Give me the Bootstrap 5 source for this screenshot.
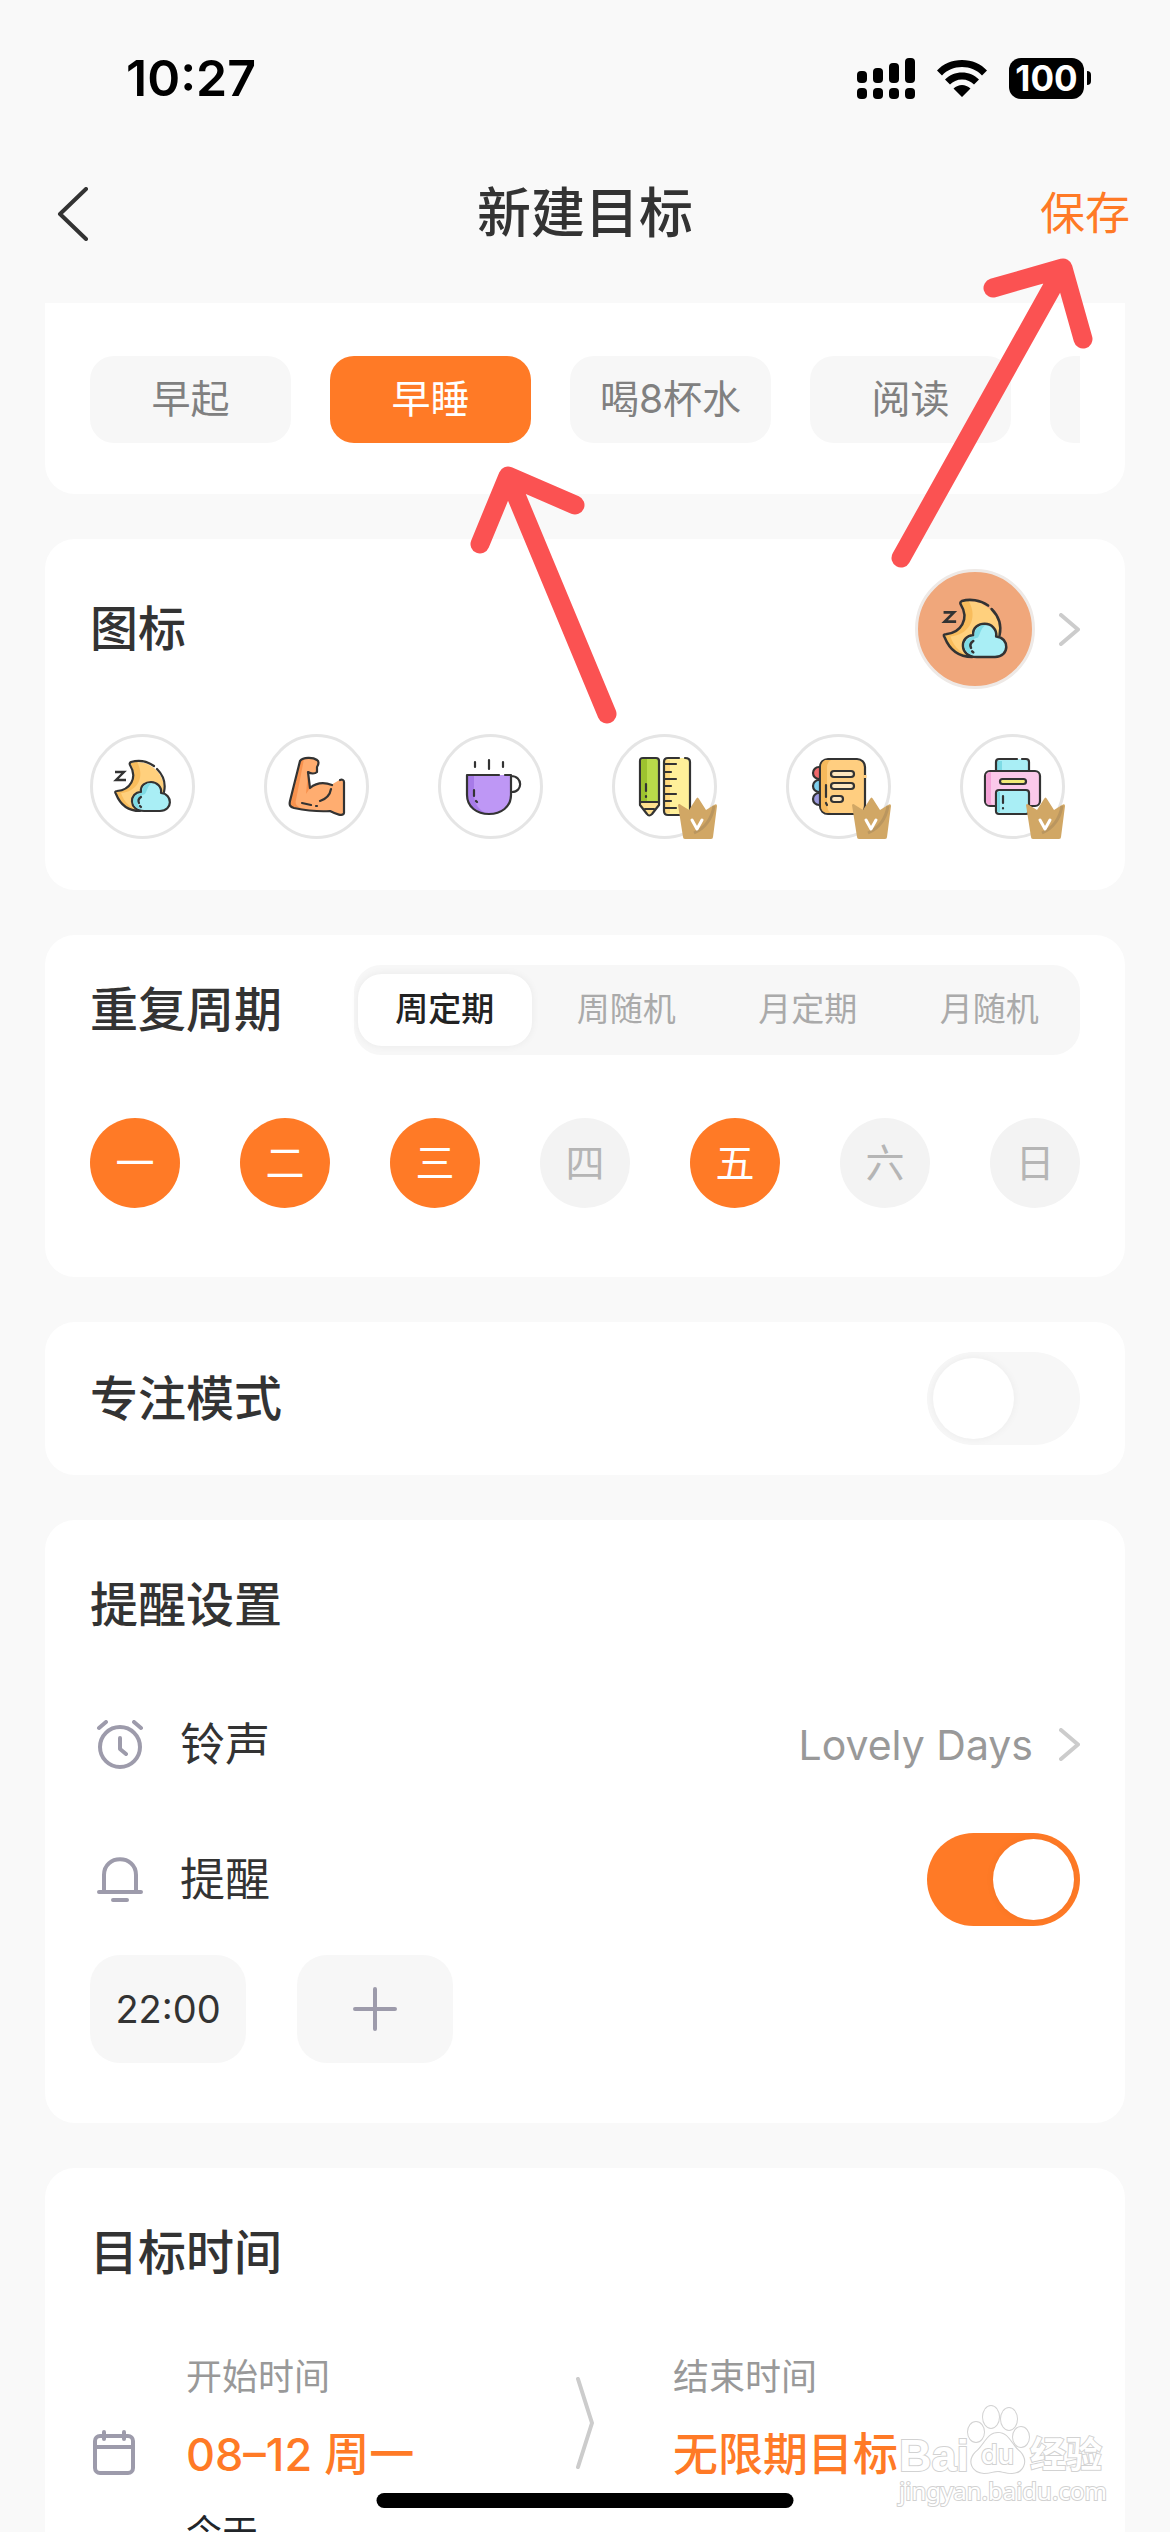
<!DOCTYPE html>
<html lang="zh-CN">
<head>
<meta charset="utf-8">
<meta name="viewport" content="width=device-width, initial-scale=1">
<title>新建目标</title>
<link rel="stylesheet" href="https://cdn.jsdelivr.net/npm/bootstrap@5.3.0/dist/css/bootstrap.min.css">
<style>
  :root { --accent: #ff7a26; --ink: #333; --soft: #f7f7f7; --muted: #999; }
  body { background: #f9f9f9; color: var(--ink); font-family: Inter, "Noto Sans CJK SC", sans-serif; font-size: 45px; line-height: 60px; }
  svg { display: block; flex: none; }
  .status-bar { height: 156px; padding: 0 79px 0 126px; }
  .wifi { margin: 0 22px; }
  .clock { font-size: 50px; font-weight: 600; color: #000; }
  .battery-box { width: 75px; height: 41px; border-radius: 12px; background: #000; color: #fff; font-size: 35px; line-height: 41px; font-weight: 700; }
  .battery-tip { width: 4px; height: 14px; border-radius: 0 4px 4px 0; background: #000; margin-left: 3px; }
  .top-bar { height: 147px; padding: 0 40px 32px; }
  .top-bar h1 { font-size: 54px; line-height: 72px; font-weight: 500; }
  .side { flex: 1 0 0; }
  .back { display: block; margin-left: 16px; }
  .save-link { color: var(--accent); font-size: 45px; text-decoration: none; }
  .sheet { background: #fff; border-radius: 30px; padding: 30px 45px; }
  .stack { gap: 45px; padding: 0 45px; }
  .sheet-cut { border-radius: 0 0 30px 30px; padding: 53px 45px 51px; }
  .heading { font-size: 48px; line-height: 66px; font-weight: 500; }
  .heading-top { margin-top: 22px; }
  .chips { gap: 39px; }
  .chip { --bs-btn-border-width: 0; flex: none; width: 201px; height: 87px; padding: 0; border-radius: 24px; background: var(--soft); color: #808080; font-size: 39px; }
  .chip.active { background: var(--accent) !important; color: #fff !important; }
  .choose { gap: 24px; }
  .current { width: 120px; height: 120px; border: 3px solid #eee9e6; border-radius: 50%; background: #f0a77b; }
  .current svg { width: 120px; height: 120px; margin: -3px; }
  .picks { gap: 69px; margin-top: 45px; padding-bottom: 21px; }
  .pick { width: 105px; height: 105px; padding: 0; border: 0; background: none; }
  .art { fill: none; stroke: #333; stroke-width: 2.2; stroke-linecap: round; stroke-linejoin: round; }
  .segment { height: 90px; border-radius: 27px; background: var(--soft); margin-left: 72px; }
  .segment .btn { --bs-btn-border-width: 0; flex: 1 0 0; height: 72px; margin: 0 4px; padding: 0; border-radius: 24px; font-size: 33px; color: #aaa; }
  .segment .btn-check:checked + .btn { background: #fff; color: #222; font-weight: 500; box-shadow: 0 0 9px rgba(0,0,0,.06); }
  .days { margin-top: 63px; padding-bottom: 39px; }
  .day { --bs-btn-border-width: 0; width: 90px; height: 90px; padding: 0; border-radius: 50%; background: #f3f3f3; color: #b5b5b5; font-size: 39px; }
  .btn-check:checked + .day { background: var(--accent); color: #fff; }
  .flip { width: 153px; height: 93px; margin: 0; padding: 6px; appearance: none; border-radius: 47px; background: var(--soft); flex: none; }
  .flip::before { content: ""; display: block; width: 81px; height: 81px; border-radius: 50%; background: #fff; box-shadow: 0 0 9px rgba(0,0,0,.05); }
  .flip:checked { background: var(--accent); }
  .flip:checked::before { margin-left: auto; }
  .settings { gap: 42px; margin-top: 60px; }
  .setting { gap: 36px; padding-left: 6px; }
  .ring { height: 93px; color: var(--muted); text-decoration: none; gap: 26px; font-size: 41px; }
  .times { gap: 51px; margin-top: 29px; padding-bottom: 30px; }
  .time-box { --bs-btn-border-width: 0; width: 156px; height: 108px; padding: 0; border-radius: 30px; background: var(--soft); color: var(--ink); font-size: 38px; }
  .caption-sm { font-size: 36px; line-height: 54px; color: var(--muted); }
  .date { display: block; font-size: 45px; line-height: 66px; font-weight: 500; color: var(--accent); text-decoration: none; margin: 18px 0; }
  .range { margin-top: 64px; }
  .calendar { margin-top: 80px; }
  .range-start { width: 328px; margin-left: 51px; }
  .range-sep { margin: 27px 79px 0 62px; }
  .home-bar { width: 417px; height: 15px; bottom: 24px; border-radius: 8px; background: #000; }
  .stamp { right: 58px; bottom: 24px; fill: #fff; stroke: #d2d2d2; stroke-width: 2; paint-order: stroke; }
</style>
</head>
<body>
<svg width="0" height="0" class="position-absolute" aria-hidden="true">
  <symbol id="moon" viewBox="0 0 105 105">
    <g class="art">
      <path fill="#ffd07d" stroke="none" d="M40 29C57 24 76 38 74 58L50 77C38 77 28 69 25 57C40 56 50 44 40 29Z"/>
      <path fill="#f9bd5c" stroke="none" d="M40 29L47 28C56 44 46 58 31 59C34 69 42 75 50 77C36 77 28 69 25 57C40 56 50 44 40 29Z"/>
      <path d="M64 32C57 27 48 26 41 28Q39 29 40 31C48 44 40 56 27 57Q24 57 26 60C30 70 38 77 50 77M67 35C73 41 76 49 74 58"/>
      <path fill="#a9eef5" d="M54 77C38 77 39 58 51 58C50 51 56 48 61 48C67 48 72 53 71 59C83 60 83 77 70 77Z"/>
      <path fill="#7edbe5" stroke="none" d="M52 59C52 52 56 49 62 49C57 52 57 58 55 60C47 62 45 69 51 75C40 73 41 60 52 59Z"/>
      <path d="M51 63C48 65 48 67 49 69M50 72L51 73"/>
      <path stroke-width="2.4" stroke-linecap="butt" stroke-linejoin="miter" d="M25 38H34L26 46H36"/>
    </g>
  </symbol>
  <symbol id="crown" viewBox="0 0 105 105">
    <path fill="#d1a765" d="M66 71Q67 69 69 71L77 76L84 65Q85.500 62 87 65L94 76L102 71Q105 69 105 72L101 103Q101 105 99 105H73Q71 105 71 103Z"/>
    <path fill="none" stroke="#ba965f" stroke-width="3" d="M102 72C100 84 93 94 82 99"/>
    <path fill="none" stroke="#fff" stroke-width="3" stroke-linecap="round" stroke-linejoin="round" d="M80 86L85 95L90 86"/>
  </symbol>
  <symbol id="next" viewBox="0 0 21 33">
    <path fill="none" stroke="#ccc" stroke-width="4" stroke-linecap="round" stroke-linejoin="round" d="M2 2L19 16.500L2 31"/>
  </symbol>
</svg>

<div class="position-relative vh-100 overflow-hidden d-flex flex-column">
  <div class="status-bar d-flex align-items-center flex-shrink-0">
    <span class="clock me-auto">10:27</span>
    <svg width="58" height="41" viewBox="0 0 58 41" aria-label="信号">
      <g fill="#000"><rect x="0" y="13" width="10" height="12" rx="4"/><rect x="16" y="10" width="10" height="15" rx="4"/><rect x="32" y="5" width="10" height="20" rx="4"/><rect x="48" y="0" width="10" height="25" rx="4"/>
      <rect x="0" y="30" width="10" height="11" rx="4"/><rect x="16" y="30" width="10" height="11" rx="4"/><rect x="32" y="30" width="10" height="11" rx="4"/><rect x="48" y="30" width="10" height="11" rx="4"/></g>
    </svg>
    <svg class="wifi" width="50" height="37" viewBox="0 0 50 37" aria-label="Wi-Fi">
      <path d="M25 0C35 0 44 4 50 10.500L45 15.500C40 10 33 7 25 7S10 10 5 15.500L0 10.500C6 4 15 0 25 0ZM25 12.500C31.500 12.500 37.500 15 42 19.500L37 24.500C34 21.500 30 19.500 25 19.500S16 21.500 13 24.500L8 19.500C12.500 15 18.500 12.500 25 12.500ZM25 25C28 25 31 26.500 33.500 28.500L25 37L16.500 28.500C19 26.500 22 25 25 25Z"/>
    </svg>
    <span class="battery-box text-center">100</span><span class="battery-tip"></span>
  </div>

  <header class="top-bar d-flex align-items-center flex-shrink-0">
    <div class="side">
      <button type="button" class="btn back p-0 border-0" aria-label="返回">
        <svg width="33" height="54" viewBox="0 0 33 54"><path fill="none" stroke="#333" stroke-width="4" stroke-linecap="round" stroke-linejoin="round" d="M30 2L4 27L30 52"/></svg>
      </button>
    </div>
    <h1 class="m-0">新建目标</h1>
    <div class="side text-end"><a class="save-link" href="#">保存</a></div>
  </header>

  <main class="stack d-flex flex-column">
    <section class="sheet sheet-cut">
      <div class="chips d-flex overflow-hidden">
        <button type="button" class="btn chip">早起</button>
        <button type="button" class="btn chip active">早睡</button>
        <button type="button" class="btn chip">喝8杯水</button>
        <button type="button" class="btn chip">阅读</button>
        <button type="button" class="btn chip" aria-label="更多"></button>
      </div>
    </section>

    <section class="sheet">
      <div class="d-flex align-items-center justify-content-between">
        <h2 class="heading m-0">图标</h2>
        <a href="#" class="choose d-flex align-items-center" aria-label="选择图标">
          <span class="current"><svg><use href="#moon"/></svg></span>
          <svg width="21" height="33"><use href="#next"/></svg>
        </a>
      </div>
      <div class="picks d-flex">
        <button type="button" class="pick" aria-label="月亮"><svg width="105" height="105" viewBox="0 0 105 105"><circle cx="52.500" cy="52.500" r="51" fill="#fff" stroke="#e5e5e5" stroke-width="3"/><use href="#moon"/></svg></button>
        <button type="button" class="pick" aria-label="手臂"><svg width="105" height="105" viewBox="0 0 105 105"><circle cx="52.500" cy="52.500" r="51" fill="#fff" stroke="#e5e5e5" stroke-width="3"/>
          <g class="art">
            <path fill="#ffad70" stroke="none" d="M36 27C39 23 50 23 54 27C55 30 53 32 53 38C51 40 47 39 44 38L46 54C52 49 60 48 67 51L77 45L80 48V79C79 83 73 81 66 78C52 78 40 76 29 74C25 72 25 70 26 67Z"/>
            <path fill="#f8924e" stroke="none" d="M36 27L40 25L32 66C30 72 36 74 42 75L29 74C25 72 25 70 26 67ZM44 38L46 54L42 60Z"/>
            <path d="M68 51C60 48 52 49 46 54L44 38C47 40 51 40 53 38L53 33C55 30 55 27 53 26C49 23 39 23 36 27L26 67C25 71 26 73 30 74C40 76 52 78 66 77C72 80 79 83 80 79V48C80 46 78 45 76 46M67 55C66 61 62 65 56 67M38 69L47 71M52 72H53"/>
          </g></svg></button>
        <button type="button" class="pick" aria-label="杯子"><svg width="105" height="105" viewBox="0 0 105 105"><circle cx="52.500" cy="52.500" r="51" fill="#fff" stroke="#e5e5e5" stroke-width="3"/>
          <g class="art">
            <path fill="#be97f5" stroke="none" d="M29 41H73V61C73 73 63 80 51 80S29 73 29 61Z"/>
            <path fill="#a77be8" stroke="none" d="M29 41H36V60C36 71 42 77 50 80C37 80 29 72 29 61Z"/>
            <path d="M61 41H29V61C29 73 39 80 51 80S73 73 73 61V41H67M73 42C85 42 85 58 74 58M37 28V33M51 26V35M65 28V33M36 56V62M38 67L39 68"/>
          </g></svg></button>
        <button type="button" class="pick" aria-label="文具"><svg width="105" height="105" viewBox="0 0 105 105"><circle cx="52.500" cy="52.500" r="51" fill="#fff" stroke="#e5e5e5" stroke-width="3"/>
          <g class="art">
            <path fill="#b9db4a" d="M28 68V27Q28 24 31 24H44Q47 24 47 27V68Z"/><path fill="#9dc22f" stroke="none" d="M29 67V27Q29 25 31 25H35V67Z"/>
            <path fill="#ffe08f" d="M28 68H47V71L40 80Q37 83 35 80L28 71Z"/><path fill="#fff" d="M33 75H42"/><path d="M34 50V57M34 62V63"/>
            <path fill="#fff09a" stroke="none" d="M52 28Q52 24 56 24H74Q78 24 78 28V81H56Q52 81 52 77Z"/><path fill="#ffd980" stroke="none" d="M53 26H58V79H53Z"/>
            <path d="M67 24H56Q52 24 52 28V77Q52 81 56 81H74Q78 81 78 77V28Q78 24 73 24M52 30H64M52 38H59M52 45H64M52 52H59M52 60H64M52 67H59M52 74H64"/>
          </g><use href="#crown"/></svg></button>
        <button type="button" class="pick" aria-label="笔记"><svg width="105" height="105" viewBox="0 0 105 105"><circle cx="52.500" cy="52.500" r="51" fill="#fff" stroke="#e5e5e5" stroke-width="3"/>
          <g class="art">
            <circle cx="33" cy="39" r="6" fill="#f0696b"/><circle cx="33" cy="52" r="6" fill="#7fd0ee"/><circle cx="33" cy="65" r="6" fill="#9b99dd"/>
            <rect x="34" y="25" width="45" height="55" rx="8" fill="#ffce80"/><path fill="#f6b95c" stroke="none" d="M42 26H39Q35 28 35 33V72Q35 79 42 79H45Q41 77 41 70V34Q41 28 45 26Z"/>
            <path stroke="#ffce80" stroke-width="3" stroke-linecap="butt" d="M79 41V44"/>
            <g fill="#ffe7bf"><rect x="45" y="37" width="23" height="6" rx="3"/><rect x="45" y="49" width="23" height="6" rx="3"/><rect x="45" y="62" width="12" height="6" rx="3"/></g>
            <path d="M40 51V63M40 69L41 71"/>
          </g><use href="#crown"/></svg></button>
        <button type="button" class="pick" aria-label="打印"><svg width="105" height="105" viewBox="0 0 105 105"><circle cx="52.500" cy="52.500" r="51" fill="#fff" stroke="#e5e5e5" stroke-width="3"/>
          <g class="art">
            <path fill="#a9eef5" stroke="none" d="M36 37V28Q36 25 39 25H66Q69 25 69 28V37Z"/><path fill="#7edbe5" stroke="none" d="M37 27H42V37H37Z"/>
            <path d="M36 36V28Q36 25 39 25H57M62 25H66Q69 25 69 28V36"/>
            <rect x="25" y="37" width="55" height="35" rx="5" fill="#fbc9ea"/><path fill="#f5a3d8" stroke="none" d="M26 41Q27 38 31 38V68Q31 71 34 71H30Q26 71 26 67Z"/>
            <rect x="40" y="45" width="26" height="5" rx="2.500" fill="#f3ec78"/>
            <rect x="36" y="56" width="33" height="24" rx="3" fill="#a9eef5"/><path fill="#7edbe5" stroke="none" d="M37 58H40V78H37Z"/>
            <path d="M43 62V69M43 74V74.500"/>
          </g><use href="#crown"/></svg></button>
      </div>
    </section>

    <section class="sheet">
      <div class="d-flex align-items-center">
        <h2 class="heading m-0 flex-shrink-0">重复周期</h2>
        <div class="segment d-flex align-items-center flex-fill" role="group" aria-label="重复周期">
          <input class="btn-check" type="radio" name="cycle" id="c1" checked><label class="btn d-flex align-items-center justify-content-center" for="c1">周定期</label>
          <input class="btn-check" type="radio" name="cycle" id="c2"><label class="btn d-flex align-items-center justify-content-center" for="c2">周随机</label>
          <input class="btn-check" type="radio" name="cycle" id="c3"><label class="btn d-flex align-items-center justify-content-center" for="c3">月定期</label>
          <input class="btn-check" type="radio" name="cycle" id="c4"><label class="btn d-flex align-items-center justify-content-center" for="c4">月随机</label>
        </div>
      </div>
      <div class="days d-flex justify-content-between">
        <div><input class="btn-check" type="checkbox" id="d1" checked><label class="btn day d-flex align-items-center justify-content-center" for="d1">一</label></div>
        <div><input class="btn-check" type="checkbox" id="d2" checked><label class="btn day d-flex align-items-center justify-content-center" for="d2">二</label></div>
        <div><input class="btn-check" type="checkbox" id="d3" checked><label class="btn day d-flex align-items-center justify-content-center" for="d3">三</label></div>
        <div><input class="btn-check" type="checkbox" id="d4"><label class="btn day d-flex align-items-center justify-content-center" for="d4">四</label></div>
        <div><input class="btn-check" type="checkbox" id="d5" checked><label class="btn day d-flex align-items-center justify-content-center" for="d5">五</label></div>
        <div><input class="btn-check" type="checkbox" id="d6"><label class="btn day d-flex align-items-center justify-content-center" for="d6">六</label></div>
        <div><input class="btn-check" type="checkbox" id="d7"><label class="btn day d-flex align-items-center justify-content-center" for="d7">日</label></div>
      </div>
    </section>

    <section class="sheet d-flex align-items-center justify-content-between">
      <label class="heading" for="focus">专注模式</label>
      <input class="flip" type="checkbox" role="switch" id="focus">
    </section>

    <section class="sheet">
      <h2 class="heading heading-top mb-0">提醒设置</h2>
      <div class="settings d-flex flex-column">
        <div class="setting d-flex align-items-center">
          <svg width="48" height="50" viewBox="0 0 48 50"><g fill="none" stroke="#9d9bab" stroke-width="4" stroke-linecap="round" stroke-linejoin="round"><circle cx="24" cy="27" r="20"/><path d="M24 18V29L30 34M3 8L10 2M45 8L38 2"/></g></svg>
          <span class="me-auto">铃声</span>
          <a class="ring d-flex align-items-center" href="#">Lovely Days <svg width="21" height="33"><use href="#next"/></svg></a>
        </div>
        <div class="setting d-flex align-items-center">
          <svg width="48" height="46" viewBox="0 0 48 46"><path fill="none" stroke="#9d9bab" stroke-width="4" stroke-linecap="round" d="M8 34V18C8 -3 40 -3 40 18V34M3 35H45M17 43H31"/></svg>
          <label class="me-auto" for="remind">提醒</label>
          <input class="flip" type="checkbox" role="switch" id="remind" checked>
        </div>
      </div>
      <div class="times d-flex">
        <button type="button" class="btn time-box">22:00</button>
        <button type="button" class="btn time-box d-flex align-items-center justify-content-center" aria-label="添加时间"><svg width="44" height="44" viewBox="0 0 44 44"><path stroke="#9d9bab" stroke-width="4" stroke-linecap="round" d="M22 2V42M2 22H42"/></svg></button>
      </div>
    </section>

    <section class="sheet">
      <h2 class="heading heading-top mb-0">目标时间</h2>
      <div class="range d-flex align-items-start">
        <svg class="calendar" width="45" height="46" viewBox="0 0 45 46"><g fill="none" stroke="#9d9bab" stroke-width="4" stroke-linecap="round"><rect x="5" y="6" width="38" height="37" rx="5"/><path d="M5 17H43M14 2V9M34 2V9"/></g></svg>
        <div class="range-start">
          <div class="caption-sm">开始时间</div>
          <a href="#" class="date">08–12 周一</a>
          <div class="caption-sm text-dark">今天</div>
        </div>
        <svg class="range-sep" width="18" height="92" viewBox="0 0 18 92"><path fill="none" stroke="#ccc" stroke-width="4" stroke-linecap="round" stroke-linejoin="round" d="M2 2L16 46L2 90"/></svg>
        <div>
          <div class="caption-sm">结束时间</div>
          <a href="#" class="date">无限期目标</a>
        </div>
      </div>
    </section>
  </main>

  <svg class="stamp position-absolute" width="216" height="110" viewBox="0 0 216 110" role="img" aria-label="Baidu 经验">
    <text x="3" y="73" font-family="Liberation Sans, sans-serif" font-weight="700" font-size="45">Bai</text>
    <ellipse cx="80" cy="34" rx="8" ry="10"/><ellipse cx="95" cy="19" rx="8" ry="11"/><ellipse cx="113" cy="21" rx="8" ry="11"/><ellipse cx="125" cy="39" rx="8" ry="10"/>
    <path d="M102 35C113 35 115 47 124 54C133 64 126 75 116 75C109 75 106 73 102 73S94 75 88 75C76 74 71 63 80 54C89 47 91 35 102 35Z"/>
    <text x="85" y="66" font-family="Inter, sans-serif" font-weight="500" font-size="27">du</text>
    <text x="134" y="70" font-family="Noto Sans CJK SC, sans-serif" font-weight="700" font-size="36">经验</text>
    <text x="3" y="102" font-family="Noto Sans, sans-serif" font-size="24">jingyan.baidu.com</text>
  </svg>
  <div class="home-bar position-absolute start-50 translate-middle-x"></div>
  <svg class="position-absolute top-0 start-0 w-100 pe-none" viewBox="0 0 1170 780" aria-hidden="true">
    <g fill="none" stroke="#fb5252" stroke-width="19" stroke-linecap="round" stroke-linejoin="round">
      <path d="M607 714L508 476M480 544L508 476L575 505"/>
      <path d="M901 558L1063 268M993 288L1063 268L1083 339"/>
    </g>
  </svg>
</div>
<script src="https://cdn.jsdelivr.net/npm/bootstrap@5.3.0/dist/js/bootstrap.bundle.min.js"></script>
</body>
</html>
